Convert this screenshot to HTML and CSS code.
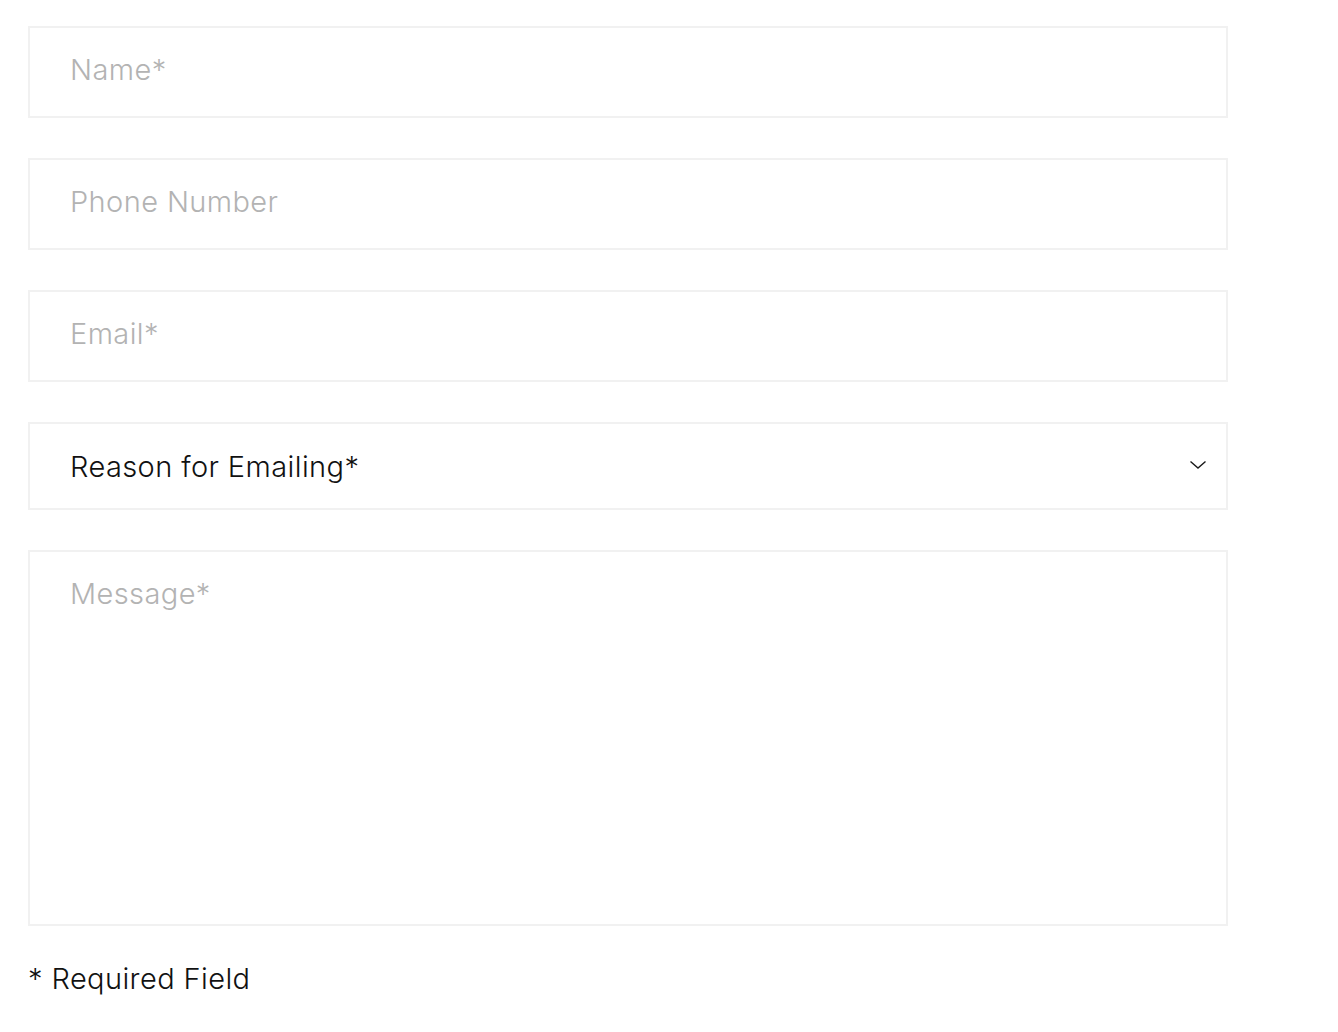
FILE: index.html
```html
<!DOCTYPE html>
<html lang="en">
<head>
<meta charset="utf-8">
<title>Contact Form</title>
<link rel="stylesheet" href="styles.css">
</head>
<body>
<form class="contact-form">
  <input class="field" type="text" placeholder="Name*">
  <input class="field" type="tel" placeholder="Phone Number">
  <input class="field" type="email" placeholder="Email*">
  <div class="select-wrap">
    <select class="field field-select">
      <option>Reason for Emailing*</option>
    </select>
    <svg class="chevron" width="18" height="10" viewBox="0 0 18 10" aria-hidden="true">
      <path d="M1.5 1.5 L9 8 L16.5 1.5" fill="none" stroke="#1a1a1a" stroke-width="1.4"/>
    </svg>
  </div>
  <textarea class="field field-message" placeholder="Message*"></textarea>
  <p class="required-note">* Required Field</p>
</form>
</body>
</html>
```
FILE: styles.css
```css
html, body {
  margin: 0;
  padding: 0;
  background: #ffffff;
}

body {
  font-family: "Inter", "Open Sans", sans-serif;
  color: #1a1a1a;
}

.contact-form {
  display: flex;
  flex-direction: column;
  gap: 40px;
  width: 1200px;
  padding: 26px 0 0 28px;
}

.field {
  box-sizing: border-box;
  width: 100%;
  margin: 0;
  border: 2px solid #f1f1f1;
  border-radius: 0;
  background: #ffffff;
  font-family: inherit;
  font-size: 29px;
  font-weight: 300;
  letter-spacing: 0.4px;
  color: #1a1a1a;
  outline: none;
}

.field::placeholder {
  color: #b3b3b3;
  opacity: 1;
}

input.field {
  height: 92px;
  padding: 0 40px 5px 40px;
}

.select-wrap {
  position: relative;
}

.field-select {
  display: block;
  height: 88px;
  padding: 0 60px 0 40px;
  appearance: none;
  -webkit-appearance: none;
  color: #111111;
}

.chevron {
  position: absolute;
  right: 21px;
  top: 38px;
  pointer-events: none;
}

.field-message {
  display: block;
  height: 376px;
  padding: 24px 40px;
  resize: none;
  line-height: normal;
}

.required-note {
  margin: -5px 0 0 0;
  font-size: 29px;
  font-weight: 300;
  letter-spacing: 0.4px;
  color: #111111;
}
```
